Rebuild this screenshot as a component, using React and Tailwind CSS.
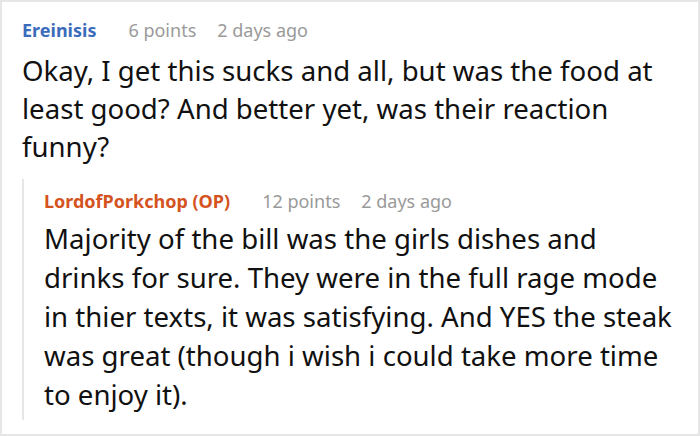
import React from "react";

const Comment = ({ author, authorClass, points, age, children }) => (
  <div>
    <div className="flex items-baseline text-[18px] leading-[24px]">
      <span className={`font-bold ${authorClass}`}>{author}</span>
      <span className="ml-[32px] text-[#9a9a9a]">{points}</span>
      <span className="ml-[21px] text-[#9a9a9a]">{age}</span>
    </div>
    {children}
  </div>
);

export default function App() {
  return (
    <div
      className="w-[700px] h-[436px] bg-white border-2 border-[#e6e6e6] pl-[20px] pr-[8px] pt-[16px] overflow-hidden"
      style={{ fontFamily: '"Noto Sans", "Open Sans", sans-serif' }}
    >
      <Comment author="Ereinisis" authorClass="text-[#3b6cbc]" points="6 points" age="2 days ago">
        <p className="text-[27.6px] leading-[38px] text-[#111111] mt-[9px]">
          Okay, I get this sucks and all, but was the food at least good? And better yet, was their reaction funny?
        </p>
      </Comment>

      <div className="mt-[14px] border-l-2 border-[#e6e6e6] pl-[20px] pr-[12px] pt-[10px] pb-[6px]">
        <Comment author="LordofPorkchop (OP)" authorClass="text-[#d4531e]" points="12 points" age="2 days ago">
          <p className="text-[27.6px] leading-[39px] text-[#111111] mt-[6px]">
            Majority of the bill was the girls dishes and drinks for sure. They were in the full rage mode in thier texts, it was satisfying. And YES the steak was great (though i wish i could take more time to enjoy it).
          </p>
        </Comment>
      </div>
    </div>
  );
}
